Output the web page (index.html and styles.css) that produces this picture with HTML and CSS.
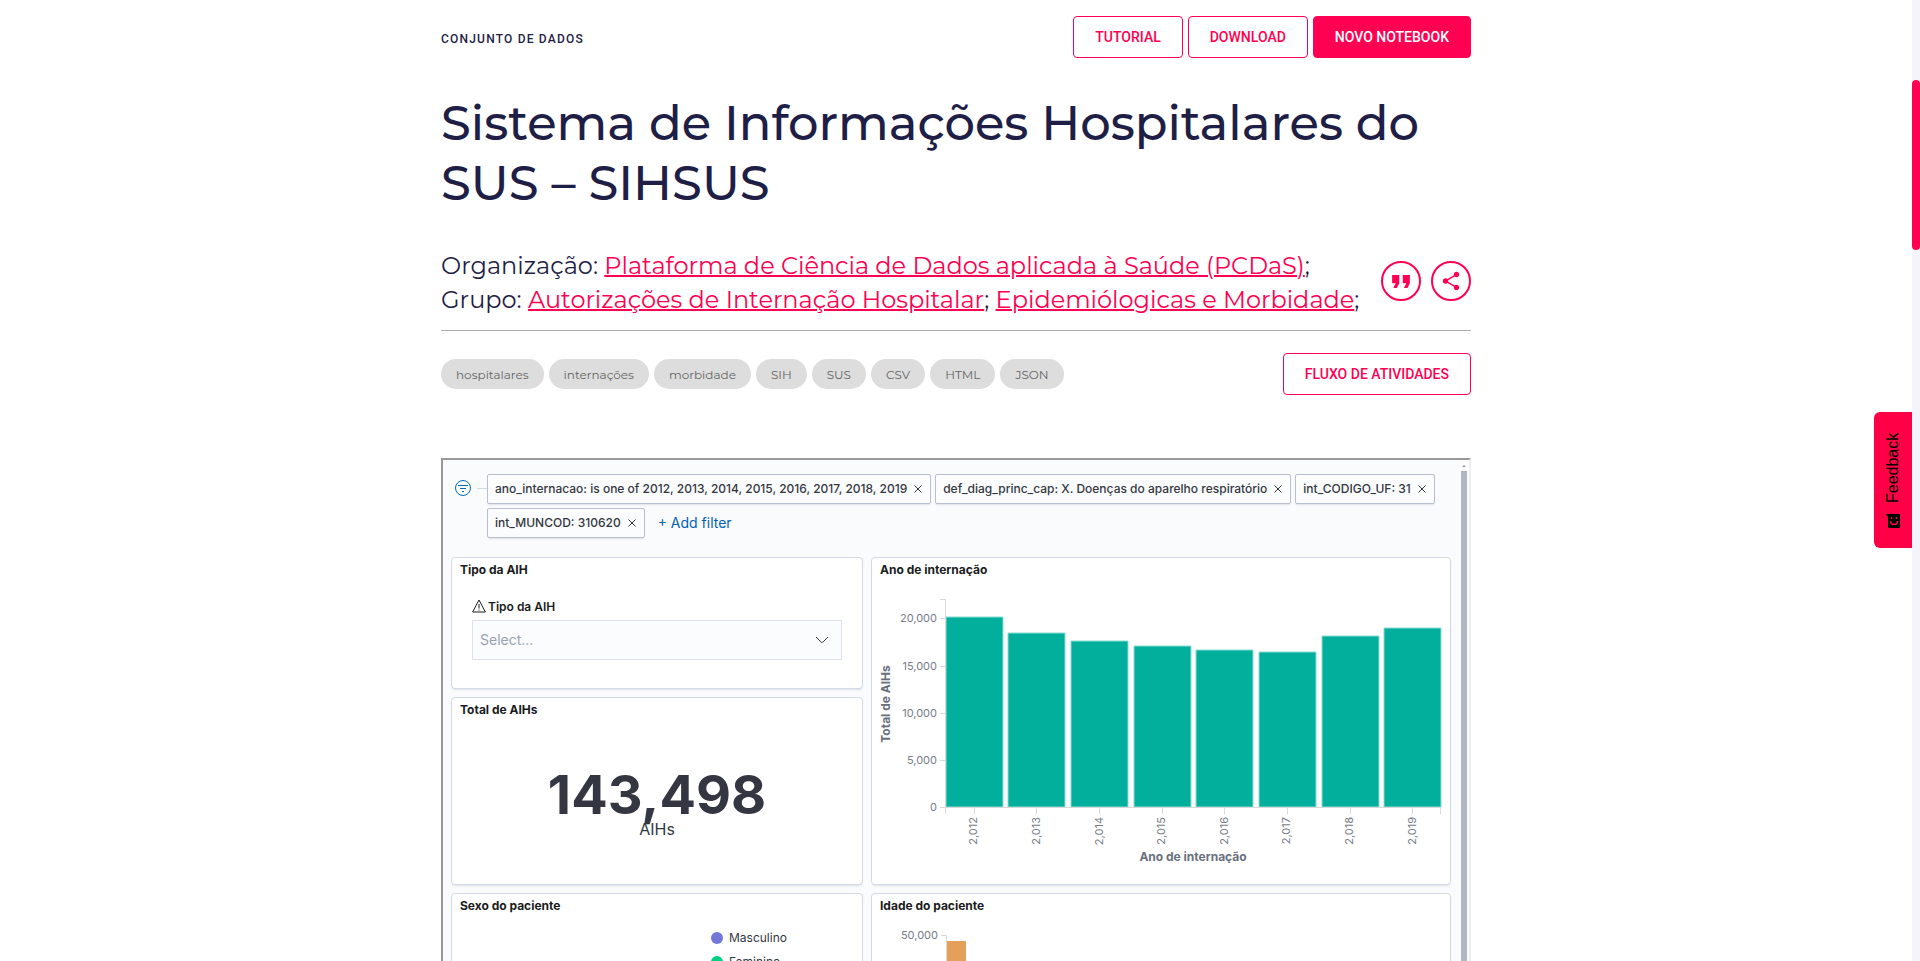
FILE: index.html
```html
<!DOCTYPE html>
<html lang="pt-BR">
<head>
<meta charset="utf-8">
<title>Sistema de Informações Hospitalares do SUS – SIHSUS</title>
<link rel="stylesheet" href="styles.css">
</head>
<body>
<div class="page">
<main class="container">
  <header class="topbar">
    <span class="eyebrow">CONJUNTO DE DADOS</span>
    <div class="actions">
      <button class="btn" type="button">TUTORIAL</button>
      <button class="btn" type="button">DOWNLOAD</button>
      <button class="btn btn-solid" type="button">NOVO NOTEBOOK</button>
    </div>
  </header>
  <h1 class="title">Sistema de Informações Hospitalares do SUS – SIHSUS</h1>
  <section class="meta">
    <div class="meta-text">
      <p>Organização: <a href="#">Plataforma de Ciência de Dados aplicada à Saúde (PCDaS)</a>;</p>
      <p>Grupo: <a href="#">Autorizações de Internação Hospitalar</a>; <a href="#">Epidemiólogicas e Morbidade</a>;</p>
    </div>
    <div class="meta-buttons">
      <button class="round" type="button" aria-label="Citar"><svg width="18" height="13" viewBox="4 6 15 11"><path d="M5 17h3l2-4V6H4v7h3zm9 0h3l2-4V6h-6v7h3z"/></svg></button>
      <button class="round" type="button" aria-label="Compartilhar"><svg width="22" height="22" viewBox="0 0 24 24"><path d="M18 16.080c-.76 0-1.440.3-1.960.77L8.910 12.700c.05-.23.09-.46.09-.7s-.04-.47-.09-.7l7.050-4.110c.54.5 1.250.81 2.040.81 1.660 0 3-1.340 3-3s-1.340-3-3-3-3 1.340-3 3c0 .24.04.47.09.7L8.040 9.810C7.500 9.310 6.790 9 6 9c-1.660 0-3 1.340-3 3s1.340 3 3 3c.79 0 1.500-.31 2.040-.81l7.120 4.160c-.05.21-.08.43-.08.65 0 1.610 1.310 2.920 2.920 2.920s2.920-1.310 2.920-2.920-1.310-2.920-2.920-2.920z"/></svg></button>
    </div>
  </section>
  <section class="tagbar">
    <ul class="tags">
      <li>hospitalares</li><li>internações</li><li>morbidade</li><li>SIH</li><li>SUS</li><li>CSV</li><li>HTML</li><li>JSON</li>
    </ul>
    <button class="btn" type="button">FLUXO DE ATIVIDADES</button>
  </section>
  <section class="frame">
    <div class="dash">
      <div class="filters">
        <svg class="filter-icon" width="16" height="16" viewBox="0 0 16 16"><circle cx="8" cy="8" r="7.500"/><path d="M3 5.500h10M5 8.500h6M7 11.500h2"/></svg>
        <span class="filter-line"></span>
        <div class="pills">
          <span class="pill">ano_internacao: is one of 2012, 2013, 2014, 2015, 2016, 2017, 2018, 2019 <button type="button" aria-label="Remover"><svg width="8" height="8" viewBox="0 0 8 8"><path d="M.5.5l7 7M7.500.5l-7 7"/></svg></button></span>
          <span class="pill">def_diag_princ_cap: X. Doenças do aparelho respiratório <button type="button" aria-label="Remover"><svg width="8" height="8" viewBox="0 0 8 8"><path d="M.5.5l7 7M7.500.5l-7 7"/></svg></button></span>
          <span class="pill">int_CODIGO_UF: 31 <button type="button" aria-label="Remover"><svg width="8" height="8" viewBox="0 0 8 8"><path d="M.5.5l7 7M7.500.5l-7 7"/></svg></button></span>
          <span class="pill">int_MUNCOD: 310620 <button type="button" aria-label="Remover"><svg width="8" height="8" viewBox="0 0 8 8"><path d="M.5.5l7 7M7.500.5l-7 7"/></svg></button></span>
          <button class="add" type="button">+ Add filter</button>
        </div>
      </div>
      <div class="panels">
        <div class="column">
          <article class="panel panel-select">
            <h2>Tipo da AIH</h2>
            <div class="field">
              <label for="aih"><svg width="14" height="14" viewBox="0 0 14 14"><path d="M7 1L13.400 13H.6zM7 5v4.500M7 10.500v1"/></svg>Tipo da AIH</label>
              <div class="select-wrap">
                <select id="aih"><option>Select...</option></select>
                <svg class="chevron" width="14" height="8" viewBox="0 0 14 8"><path d="M1 1l5.300 5.300q.7.600 1.400 0L13 1"/></svg>
              </div>
            </div>
          </article>
          <article class="panel panel-metric">
            <h2>Total de AIHs</h2>
            <div class="metric"><strong>143,498</strong><span>AIHs</span></div>
          </article>
          <article class="panel panel-sex">
            <h2>Sexo do paciente</h2>
            <ul class="legend"><li><i class="dot violet"></i>Masculino</li><li><i class="dot green"></i>Feminino</li></ul>
          </article>
        </div>
        <div class="column">
          <article class="panel panel-chart">
            <h2>Ano de internação</h2>
            <svg class="chart" viewBox="872 582 578 302" role="img" aria-label="Total de AIHs por ano de internação">
              <g class="bars">
                <path d="M946 617h57v190h-57zM1008 633h57v174h-57zM1071 641h57v166h-57zM1134 646h57v161h-57zM1196 650h57v157h-57zM1259 652h57v155h-57zM1322 636h57v171h-57zM1384 628h57v179h-57z"/>
              </g>
              <path class="axis" d="M945.500 599V814M940 599.500h5M940 618.500h5M940 666.500h5M940 713.500h5M940 760.500h5M940 807.500h501M974.500 808v6M1036.500 808v6M1099.500 808v6M1162.500 808v6M1224.500 808v6M1287.500 808v6M1350.500 808v6M1412.500 808v6M1440.500 808v6"/>
              <g class="ticks">
                <text x="937" y="622">20,000</text><text x="937" y="670">15,000</text><text x="937" y="717">10,000</text><text x="937" y="764">5,000</text><text x="937" y="811">0</text>
                <text transform="translate(977 817) rotate(-90)">2,012</text><text transform="translate(1040 817) rotate(-90)">2,013</text><text transform="translate(1103 817) rotate(-90)">2,014</text><text transform="translate(1165 817) rotate(-90)">2,015</text><text transform="translate(1228 817) rotate(-90)">2,016</text><text transform="translate(1290 817) rotate(-90)">2,017</text><text transform="translate(1353 817) rotate(-90)">2,018</text><text transform="translate(1416 817) rotate(-90)">2,019</text>
              </g>
              <text class="axis-title" x="1193" y="861">Ano de internação</text>
              <text class="axis-title" transform="translate(890 704) rotate(-90)">Total de AIHs</text>
            </svg>
          </article>
          <article class="panel panel-age">
            <h2>Idade do paciente</h2>
            <svg class="chart" viewBox="872 918 578 200" role="img" aria-label="Idade do paciente">
              <path class="bar-orange" d="M947 941h19v178h-19z"/>
              <path class="axis" d="M941 935.500h5.500V1118"/>
              <g class="ticks"><text x="938" y="939">50,000</text></g>
            </svg>
          </article>
        </div>
      </div>
    </div>
    <div class="inner-scroll"><span class="arrow"></span><span class="inner-thumb"></span></div>
  </section>
</main>
<button class="feedback" type="button"><svg width="14" height="14" viewBox="0 0 14 14"><g transform="rotate(180 7 7)"><path d="M0 0H13Q14 0 14 1V13Q14 14 13 14H3Q2 14 2 13V3Z"/><path class="smile" d="M5.500 3v2M10.500 3v2M4.500 7q0 3.500 3.500 3.500T11.500 7"/></g></svg><span>Feedback</span></button>
<div class="rail"><span class="rail-thumb"></span></div>
</div>
</body>
</html>
```
FILE: styles.css
```css
* { box-sizing: border-box; }
body { margin: 0; background: #fff; color: #1e1e46; font-family: Montserrat, Inter, sans-serif; }
h1, h2, p, ul { margin: 0; padding: 0; font-weight: 400; }
ul { list-style: none; }
button { font-family: inherit; cursor: pointer; }
.page { position: relative; height: 100vh; overflow: hidden; padding-right: 8px; }
.container { max-width: 1030px; height: 100%; margin: 0 auto; padding-top: 16px; display: flex; flex-direction: column; }
.topbar { display: flex; justify-content: space-between; align-items: center; }
.eyebrow { font: 500 12px/16px Roboto, sans-serif; letter-spacing: 0.1em; padding-top: 4px; }
.actions { display: flex; gap: 5px; }
.btn { height: 42px; padding: 0 21px; border: 1px solid #ff0052; border-radius: 4px; background: #fff; color: #ff0052; font: 500 14px/20px Roboto, sans-serif; white-space: nowrap; }
.btn-solid { background: #ff0052; color: #fff; }
.title { margin-top: 35px; font-size: 48px; line-height: 60px; font-weight: 500; }
.meta { margin-top: 36px; height: 82px; display: flex; justify-content: space-between; border-bottom: 1px solid #aaa; }
.meta-text { font-size: 24px; line-height: 34px; white-space: nowrap; font-weight: 400; }
.meta a { color: #ff0052; text-decoration-thickness: 2px; }
.meta-buttons { display: flex; gap: 10px; padding-top: 12px; }
.round { width: 40px; height: 40px; padding: 0; display: flex; align-items: center; justify-content: center; border: 2px solid #ff0052; border-radius: 50%; background: #fff; fill: #ff0052; }
.tagbar { margin-top: 22px; display: flex; align-items: center; justify-content: space-between; }
.tags { display: flex; gap: 5px; }
.tags li { padding: 2px 15px 0; border-radius: 16px; background: #ddd; color: #666; font-size: 12px; line-height: 28px; }
.frame { flex: 1; min-height: 0; margin-top: 63px; display: flex; overflow: hidden; border: 2px solid #999; border-right-color: #eee; border-bottom: 0; background: #fafbfd; font-family: Inter, sans-serif; }
.dash { flex: 1; min-width: 0; padding: 14px 8px 0; }
.filters { display: flex; padding: 0 8px 0 4px; }
.filter-icon { margin-top: 6px; fill: none; stroke: #006bb4; }
.filter-line { width: 10px; height: 1px; margin: 14px 0 0 6px; background: #d3dae6; }
.pills { flex: 1; display: flex; flex-wrap: wrap; gap: 4px; }
.pill { height: 30px; display: flex; align-items: center; gap: 7px; padding: 0 8px 1px 7px; border: 1px solid #b8bfd0; border-radius: 2px; background: #fbfcfd; box-shadow: 0 2px 2px -1px rgba(152, 162, 179, .3); color: #343741; font-size: 12px; font-weight: 500; white-space: nowrap; }
.pill button { padding: 0; border: 0; background: none; display: flex; fill: none; stroke: #343741; }
.add { padding: 0 9px; border: 0; background: none; color: #0061b4; font-size: 14px; line-height: 30px; }
.panels { margin-top: 19px; display: grid; grid-template-columns: 412fr 580fr; gap: 8px; }
.column { display: flex; flex-direction: column; gap: 8px; }
.panel { border: 1px solid #d3dae6; border-radius: 4px; background: #fff; box-shadow: 0 2px 2px -1px rgba(152, 162, 179, .3); }
.panel h2 { padding: 0 8px; font-size: 12px; line-height: 24px; font-weight: 700; color: #1a1c21; }
.panel-select { height: 132px; }
.panel-metric { height: 188px; }
.panel-sex, .panel-age { height: 240px; }
.panel-chart { min-height: 328px; }
.field { padding: 16px 20px 0; }
.field label { display: flex; align-items: center; height: 16px; margin-bottom: 6px; gap: 2px; color: #1a1c21; font-size: 12px; font-weight: 600; }
.field label svg { fill: none; stroke: #1a1c21; }
.select-wrap { position: relative; }
.select-wrap select { width: 100%; height: 40px; padding: 0 7px; appearance: none; border: 1px solid #dfe2ee; border-radius: 0; background: #fbfcfd; color: #98a2b3; font: 14px/20px Inter, sans-serif; }
.chevron { position: absolute; right: 13px; top: 16px; fill: none; stroke: #343741; }
.metric { margin-top: 47px; display: flex; flex-direction: column; align-items: center; color: #343741; }
.metric strong { font-size: 54px; line-height: 52px; font-weight: 700; }
.metric span { font-size: 16px; line-height: 16px; }
.legend { display: flex; flex-direction: column; gap: 4px; padding: 10px 0 0 259px; color: #343741; font-size: 12px; line-height: 20px; }
.legend li { display: flex; align-items: center; gap: 6px; }
.dot { width: 12px; height: 12px; border-radius: 50%; }
.violet { background: #7277d8; }
.green { background: #00d084; }
.chart { display: block; width: 100%; font-family: Inter, sans-serif; }
.bars { fill: #02af9d; stroke: #8addd3; stroke-width: 1; }
.bar-orange { fill: #e4a05b; }
.axis { fill: none; stroke: #d8d8d8; }
.ticks { fill: #777c88; font-size: 11px; text-anchor: end; }
.axis-title { fill: #69707d; font-size: 12px; font-weight: 700; text-anchor: middle; }
.inner-scroll { width: 10px; display: flex; flex-direction: column; align-items: center; padding-top: 5px; background: #fcfcfd; }
.arrow { border: 2px solid transparent; border-top: 0; border-bottom-color: #999; margin-bottom: 4px; }
.inner-thumb { flex: 1; width: 6px; background: #b2b6be; }
.feedback { position: absolute; right: 8px; top: 412px; height: 136px; width: 38px; padding: 0; display: flex; align-items: center; justify-content: center; gap: 11px; writing-mode: vertical-rl; transform: rotate(180deg); border: 0; border-radius: 0 6px 6px 0; background: #ff0046; color: #000; font: 16px/18px "Liberation Sans", sans-serif; }
.smile { fill: none; stroke: #ff0046; stroke-width: 1.500; }
.rail { position: absolute; right: 0; top: 0; bottom: 0; width: 8px; padding-top: 80px; background: #f5f4fa; }
.rail-thumb { display: block; height: 170px; border-radius: 4px; background: #ff0052; }
```
